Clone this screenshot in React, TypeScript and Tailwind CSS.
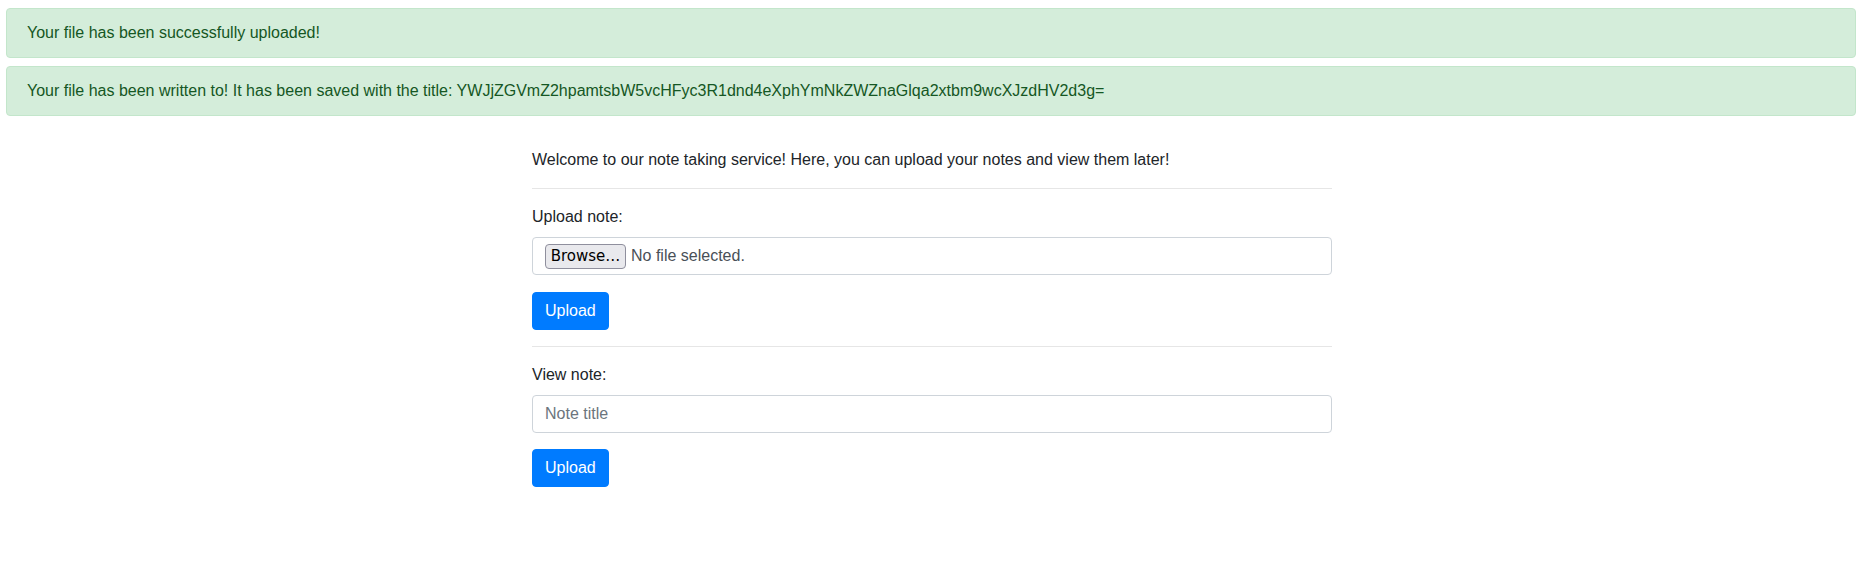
const TITLE = 'YWJjZGVmZ2hpamtsbW5vcHFyc3R1dnd4eXphYmNkZWZnaGlqa2xtbm9wcXJzdHV2d3g=';

const Alert = ({ children }: { children: React.ReactNode }) => (
    <div className="rounded border border-[#c3e6cb] bg-[#d4edda] px-5 py-3 leading-6 text-[#155724]">
        {children}
    </div>
);

const UploadButton = () => (
    <button className="w-fit rounded border border-[#007bff] bg-[#007bff] px-3 py-1.5 leading-6 text-white">
        Upload
    </button>
);

export default function App() {
    return (
        <div className="min-h-[576px] bg-white font-['Liberation_Sans',Arial,sans-serif] text-base text-[#212529]">
            <div className="flex flex-col gap-2 px-[6px] pt-2">
                <Alert>Your file has been successfully uploaded!</Alert>
                <Alert>Your file has been written to! It has been saved with the title: {TITLE}</Alert>
            </div>

            <div className="mx-auto mt-8 flex w-[800px] translate-x-[1px] flex-col">
                <p className="leading-6">
                    Welcome to our note taking service! Here, you can upload your notes and view them later!
                </p>
                <hr className="my-4 border-t border-[#e6e6e6]" />

                <label className="mb-2 leading-6">Upload note:</label>
                <div className="mb-[17px] flex h-[38px] items-center gap-[5px] rounded border border-[#ced4da] px-3">
                    <span className="flex h-[25px] w-[81px] items-center justify-center rounded border border-[#8f8f9d] bg-[#e9e9ed] font-['DejaVu_Sans',sans-serif] text-[15px] text-black">
                        Browse…
                    </span>
                    <span className="text-[#495057]">No file selected.</span>
                </div>
                <UploadButton />
                <hr className="my-4 border-t border-[#e6e6e6]" />

                <label className="mb-2 leading-6">View note:</label>
                <input
                    className="mb-4 h-[38px] rounded border border-[#ced4da] px-3 text-[#495057] outline-none placeholder:text-[#6c757d]"
                    placeholder="Note title"
                />
                <UploadButton />
            </div>
        </div>
    );
}
